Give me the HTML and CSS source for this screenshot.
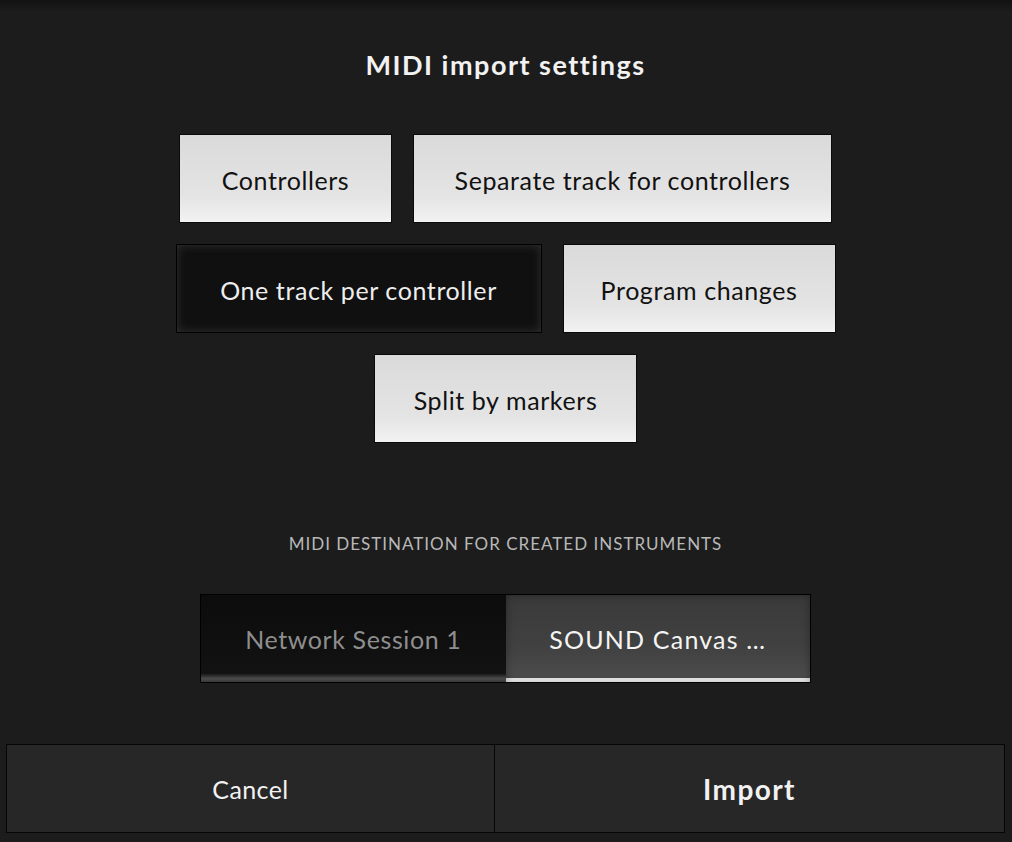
FILE: index.html
```html
<!DOCTYPE html>
<html>
<head>
    <meta charset="UTF-8">
    <title>MIDI import settings</title>
    <link rel="stylesheet" href="styles.css">
</head>
<body>
    <div class="dialog">
        <h1 class="title">MIDI import settings</h1>

        <div class="options">
            <div class="row">
                <button class="toggle on w-controllers">Controllers</button>
                <button class="toggle on w-separate">Separate track for controllers</button>
            </div>
            <div class="row">
                <button class="toggle off w-onetrack">One track per controller</button>
                <button class="toggle on w-program">Program changes</button>
            </div>
            <div class="row">
                <button class="toggle on w-split">Split by markers</button>
            </div>
        </div>

        <div class="section-label">MIDI DESTINATION FOR CREATED INSTRUMENTS</div>

        <div class="segmented">
            <button class="segment">Network Session 1</button>
            <button class="segment selected">SOUND Canvas …</button>
        </div>

        <div class="footer">
            <button class="footer-btn cancel">Cancel</button>
            <button class="footer-btn import">Import</button>
        </div>
    </div>
</body>
</html>
```

FILE: styles.css
```css
html, body {
    margin: 0;
    padding: 0;
}

body {
    width: 1012px;
    height: 842px;
    overflow: hidden;
    background: linear-gradient(to bottom, #121212 0px, #1a1a1a 9px, #1c1c1c 11px);
    font-family: Lato, "Open Sans", sans-serif;
    color: #eeeeee;
}

button {
    font-family: inherit;
    margin: 0;
    padding: 0;
    cursor: pointer;
}

.dialog {
    height: 842px;
    box-sizing: border-box;
    padding: 0 7px 9px 6px;
    display: flex;
    flex-direction: column;
}

.title {
    margin: 48px 0 0 0;
    height: 34px;
    line-height: 34px;
    font-size: 27px;
    font-weight: bold;
    text-align: center;
    color: #f2f2f2;
    letter-spacing: 1.5px;
}

.options {
    margin-top: 52px;
    display: flex;
    flex-direction: column;
    align-items: center;
    gap: 21px;
}

.row {
    display: flex;
    gap: 21px;
}

.toggle {
    height: 89px;
    font-size: 25px;
    letter-spacing: 0.6px;
    border: 1px solid #0a0a0a;
    box-sizing: border-box;
    padding-top: 2px;
}

.toggle.on {
    background: linear-gradient(to bottom, #dadada 0%, #e4e4e4 70%, #f2f2f2 100%);
    color: #111111;
}

.toggle.off {
    background: #101010;
    color: #eeeeee;
    border-color: #000;
    box-shadow: inset 0 0 10px rgba(90, 90, 90, 0.45);
}

.w-controllers { width: 213px; }
.w-separate { width: 419px; }
.w-onetrack { width: 366px; }
.w-program { width: 273px; }
.w-split { width: 263px; }

.section-label {
    margin-top: 91px;
    height: 20px;
    line-height: 20px;
    text-align: center;
    font-size: 17px;
    color: #b8b8b8;
    letter-spacing: 1px;
}

.segmented {
    margin: 40px auto 0 auto;
    display: flex;
    border: 1px solid #000;
    width: 611px;
    height: 89px;
    box-sizing: border-box;
}

.segment {
    flex: 1;
    border: 0;
    font-size: 25px;
    letter-spacing: 0.6px;
    background: linear-gradient(to bottom, #0c0c0c 0%, #121212 90%, #4a4a4a 96%, #3a3a3a 100%);
    color: #8e8e8e;
}

.segment.selected {
    background: linear-gradient(to bottom, #3a3a3a 0%, #414141 60%, #4c4c4c 95%, #f4f4f4 96%, #ffffff 100%);
    color: #f4f4f4;
    letter-spacing: 1.2px;
    box-shadow: inset 0 0 8px rgba(0, 0, 0, 0.35);
}

.footer {
    margin-top: 61px;
    display: flex;
    height: 89px;
}

.footer-btn {
    height: 89px;
    box-sizing: border-box;
    border: 1px solid #050505;
    background: #272727;
    color: #f2f2f2;
    font-size: 25px;
    letter-spacing: 0.4px;
}

.cancel {
    width: 489px;
}

.import {
    flex: 1;
    font-weight: bold;
    font-size: 28px;
    letter-spacing: 1.4px;
    border-left: 0;
}
```
